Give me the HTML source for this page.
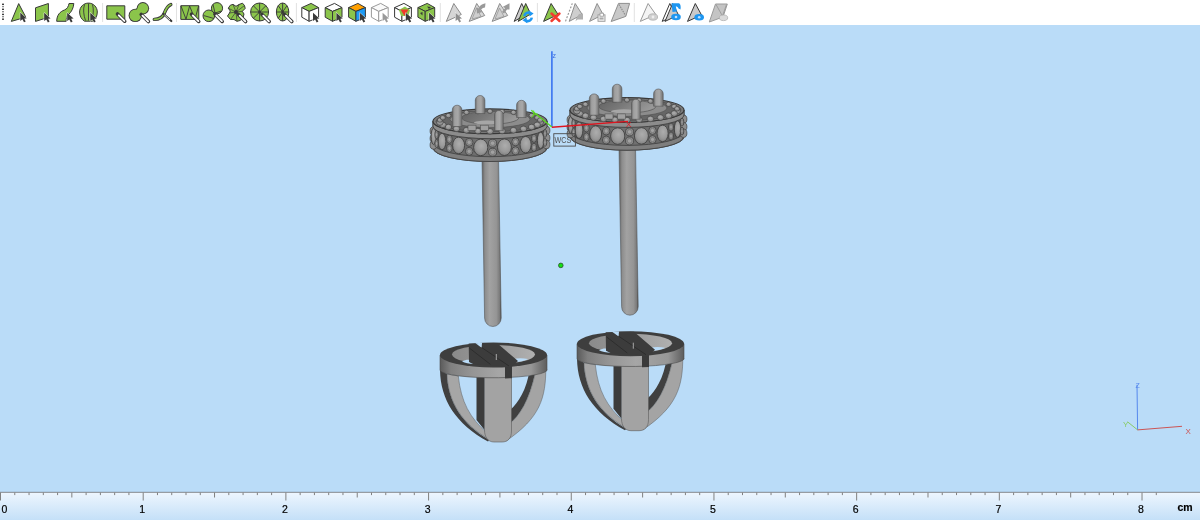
<!DOCTYPE html>
<html><head><meta charset="utf-8"><style>
html,body{margin:0;padding:0;width:1200px;height:520px;overflow:hidden;background:#badcf8;font-family:"Liberation Sans",sans-serif}
</style></head><body>
<svg width="1200" height="520" viewBox="0 0 1200 520" style="position:absolute;left:0;top:0;will-change:transform">

<defs>
 <linearGradient id="rulerg" x1="0" y1="0" x2="0" y2="1">
  <stop offset="0" stop-color="#eef6fe"/><stop offset="1" stop-color="#c4e0f8"/>
 </linearGradient>
 <linearGradient id="postg" x1="0" y1="0" x2="1" y2="0">
  <stop offset="0" stop-color="#5e5e5e"/><stop offset="0.15" stop-color="#8c8c8c"/>
  <stop offset="0.4" stop-color="#a2a2a2"/><stop offset="0.75" stop-color="#959595"/>
  <stop offset="0.92" stop-color="#7a7a7a"/><stop offset="1" stop-color="#4e4e4e"/>
 </linearGradient>
 <linearGradient id="bandg" x1="0" y1="0" x2="1" y2="0">
  <stop offset="0" stop-color="#565656"/><stop offset="0.2" stop-color="#6a6a6a"/>
  <stop offset="0.5" stop-color="#727272"/><stop offset="0.8" stop-color="#6a6a6a"/>
  <stop offset="1" stop-color="#505050"/>
 </linearGradient>
 <linearGradient id="bbandg" x1="0" y1="0" x2="1" y2="0">
  <stop offset="0" stop-color="#5a5a5a"/><stop offset="0.1" stop-color="#808080"/>
  <stop offset="0.3" stop-color="#959595"/><stop offset="0.55" stop-color="#a6a6a6"/><stop offset="0.85" stop-color="#979797"/>
  <stop offset="1" stop-color="#5c5c5c"/>
 </linearGradient>
 <linearGradient id="wallg" x1="0" y1="0" x2="1" y2="0">
  <stop offset="0" stop-color="#8a8a8a"/><stop offset="0.5" stop-color="#9a9a9a"/>
  <stop offset="1" stop-color="#b0b0b0"/>
 </linearGradient>
 <linearGradient id="prongg" x1="0" y1="0" x2="1" y2="0">
  <stop offset="0" stop-color="#6a6a6a"/><stop offset="0.25" stop-color="#a0a0a0"/>
  <stop offset="0.6" stop-color="#a8a8a8"/><stop offset="1" stop-color="#6e6e6e"/>
 </linearGradient>
 <linearGradient id="holeg" x1="0" y1="0" x2="1" y2="0.3">
  <stop offset="0" stop-color="#626262"/><stop offset="0.5" stop-color="#7a7a7a"/>
  <stop offset="1" stop-color="#989898"/>
 </linearGradient>
 <radialGradient id="ballg" cx="0.55" cy="0.4" r="0.65">
  <stop offset="0" stop-color="#adadad"/><stop offset="0.6" stop-color="#999"/><stop offset="1" stop-color="#7a7a7a"/>
 </radialGradient>
</defs>

<rect x="0" y="0" width="1200" height="25" fill="#ffffff"/>
<rect x="0" y="25" width="1200" height="467" fill="#badcf8"/>
<rect x="0" y="492" width="1200" height="28" fill="url(#rulerg)"/>
<rect x="0" y="491" width="1200" height="1" fill="#aecbe4"/>
<rect x="0" y="492" width="1200" height="1" fill="#979ca2"/>
<rect x="0.00" y="492.5" width="1" height="8" fill="#808080"/>
<rect x="14.27" y="492.5" width="1" height="2.6" fill="#808080"/>
<rect x="28.54" y="492.5" width="1" height="2.6" fill="#808080"/>
<rect x="42.81" y="492.5" width="1" height="2.6" fill="#808080"/>
<rect x="57.08" y="492.5" width="1" height="2.6" fill="#808080"/>
<rect x="71.34" y="492.5" width="1" height="5" fill="#808080"/>
<rect x="85.61" y="492.5" width="1" height="2.6" fill="#808080"/>
<rect x="99.88" y="492.5" width="1" height="2.6" fill="#808080"/>
<rect x="114.15" y="492.5" width="1" height="2.6" fill="#808080"/>
<rect x="128.42" y="492.5" width="1" height="2.6" fill="#808080"/>
<rect x="142.69" y="492.5" width="1" height="8" fill="#808080"/>
<rect x="156.96" y="492.5" width="1" height="2.6" fill="#808080"/>
<rect x="171.23" y="492.5" width="1" height="2.6" fill="#808080"/>
<rect x="185.50" y="492.5" width="1" height="2.6" fill="#808080"/>
<rect x="199.77" y="492.5" width="1" height="2.6" fill="#808080"/>
<rect x="214.03" y="492.5" width="1" height="5" fill="#808080"/>
<rect x="228.30" y="492.5" width="1" height="2.6" fill="#808080"/>
<rect x="242.57" y="492.5" width="1" height="2.6" fill="#808080"/>
<rect x="256.84" y="492.5" width="1" height="2.6" fill="#808080"/>
<rect x="271.11" y="492.5" width="1" height="2.6" fill="#808080"/>
<rect x="285.38" y="492.5" width="1" height="8" fill="#808080"/>
<rect x="299.65" y="492.5" width="1" height="2.6" fill="#808080"/>
<rect x="313.92" y="492.5" width="1" height="2.6" fill="#808080"/>
<rect x="328.19" y="492.5" width="1" height="2.6" fill="#808080"/>
<rect x="342.46" y="492.5" width="1" height="2.6" fill="#808080"/>
<rect x="356.73" y="492.5" width="1" height="5" fill="#808080"/>
<rect x="370.99" y="492.5" width="1" height="2.6" fill="#808080"/>
<rect x="385.26" y="492.5" width="1" height="2.6" fill="#808080"/>
<rect x="399.53" y="492.5" width="1" height="2.6" fill="#808080"/>
<rect x="413.80" y="492.5" width="1" height="2.6" fill="#808080"/>
<rect x="428.07" y="492.5" width="1" height="8" fill="#808080"/>
<rect x="442.34" y="492.5" width="1" height="2.6" fill="#808080"/>
<rect x="456.61" y="492.5" width="1" height="2.6" fill="#808080"/>
<rect x="470.88" y="492.5" width="1" height="2.6" fill="#808080"/>
<rect x="485.15" y="492.5" width="1" height="2.6" fill="#808080"/>
<rect x="499.41" y="492.5" width="1" height="5" fill="#808080"/>
<rect x="513.68" y="492.5" width="1" height="2.6" fill="#808080"/>
<rect x="527.95" y="492.5" width="1" height="2.6" fill="#808080"/>
<rect x="542.22" y="492.5" width="1" height="2.6" fill="#808080"/>
<rect x="556.49" y="492.5" width="1" height="2.6" fill="#808080"/>
<rect x="570.76" y="492.5" width="1" height="8" fill="#808080"/>
<rect x="585.03" y="492.5" width="1" height="2.6" fill="#808080"/>
<rect x="599.30" y="492.5" width="1" height="2.6" fill="#808080"/>
<rect x="613.57" y="492.5" width="1" height="2.6" fill="#808080"/>
<rect x="627.84" y="492.5" width="1" height="2.6" fill="#808080"/>
<rect x="642.11" y="492.5" width="1" height="5" fill="#808080"/>
<rect x="656.37" y="492.5" width="1" height="2.6" fill="#808080"/>
<rect x="670.64" y="492.5" width="1" height="2.6" fill="#808080"/>
<rect x="684.91" y="492.5" width="1" height="2.6" fill="#808080"/>
<rect x="699.18" y="492.5" width="1" height="2.6" fill="#808080"/>
<rect x="713.45" y="492.5" width="1" height="8" fill="#808080"/>
<rect x="727.72" y="492.5" width="1" height="2.6" fill="#808080"/>
<rect x="741.99" y="492.5" width="1" height="2.6" fill="#808080"/>
<rect x="756.26" y="492.5" width="1" height="2.6" fill="#808080"/>
<rect x="770.53" y="492.5" width="1" height="2.6" fill="#808080"/>
<rect x="784.79" y="492.5" width="1" height="5" fill="#808080"/>
<rect x="799.06" y="492.5" width="1" height="2.6" fill="#808080"/>
<rect x="813.33" y="492.5" width="1" height="2.6" fill="#808080"/>
<rect x="827.60" y="492.5" width="1" height="2.6" fill="#808080"/>
<rect x="841.87" y="492.5" width="1" height="2.6" fill="#808080"/>
<rect x="856.14" y="492.5" width="1" height="8" fill="#808080"/>
<rect x="870.41" y="492.5" width="1" height="2.6" fill="#808080"/>
<rect x="884.68" y="492.5" width="1" height="2.6" fill="#808080"/>
<rect x="898.95" y="492.5" width="1" height="2.6" fill="#808080"/>
<rect x="913.22" y="492.5" width="1" height="2.6" fill="#808080"/>
<rect x="927.49" y="492.5" width="1" height="5" fill="#808080"/>
<rect x="941.75" y="492.5" width="1" height="2.6" fill="#808080"/>
<rect x="956.02" y="492.5" width="1" height="2.6" fill="#808080"/>
<rect x="970.29" y="492.5" width="1" height="2.6" fill="#808080"/>
<rect x="984.56" y="492.5" width="1" height="2.6" fill="#808080"/>
<rect x="998.83" y="492.5" width="1" height="8" fill="#808080"/>
<rect x="1013.10" y="492.5" width="1" height="2.6" fill="#808080"/>
<rect x="1027.37" y="492.5" width="1" height="2.6" fill="#808080"/>
<rect x="1041.64" y="492.5" width="1" height="2.6" fill="#808080"/>
<rect x="1055.91" y="492.5" width="1" height="2.6" fill="#808080"/>
<rect x="1070.17" y="492.5" width="1" height="5" fill="#808080"/>
<rect x="1084.44" y="492.5" width="1" height="2.6" fill="#808080"/>
<rect x="1098.71" y="492.5" width="1" height="2.6" fill="#808080"/>
<rect x="1112.98" y="492.5" width="1" height="2.6" fill="#808080"/>
<rect x="1127.25" y="492.5" width="1" height="2.6" fill="#808080"/>
<rect x="1141.52" y="492.5" width="1" height="8" fill="#808080"/>
<rect x="1155.79" y="492.5" width="1" height="2.6" fill="#808080"/>
<g font-family="Liberation Sans, sans-serif" font-size="10.5" fill="#000" stroke="#000" stroke-width="0.2"><text x="4.5" y="512.5" text-anchor="middle">0</text><text x="142.2" y="512.5" text-anchor="middle">1</text><text x="284.9" y="512.5" text-anchor="middle">2</text><text x="427.6" y="512.5" text-anchor="middle">3</text><text x="570.3" y="512.5" text-anchor="middle">4</text><text x="713.0" y="512.5" text-anchor="middle">5</text><text x="855.6" y="512.5" text-anchor="middle">6</text><text x="998.3" y="512.5" text-anchor="middle">7</text><text x="1141.0" y="512.5" text-anchor="middle">8</text><text x="1185" y="510.5" text-anchor="middle" font-weight="bold" font-size="10.5">cm</text></g>
<g id="ear1"><path d="M440,370 C440.5,400 456,424 488,441.5 C489,441 489,440.5 488.5,439.5 C462,424 448,402 447,374 Z" fill="#404040"/>
<path d="M447,374 C448,402 462,424 490,440 L487,433 C470,418 461,402 458.3,376 Z" fill="#a6a6a6" stroke="#5a5a5a" stroke-width="0.5"/>
<path d="M476.5,377 L484.5,377 L484.5,430 L476.5,420 Z" fill="#3c3c3c"/>
<path d="M535,374 C529,400 520,416 508,425 L508,412 C515,406 524,396 528.5,376 Z" fill="#404040"/>
<path d="M545.8,367 C546,398 540,418 506,441 L508,425 C520,416 529,400 535,374 Z" fill="#a4a4a4" stroke="#5a5a5a" stroke-width="0.5"/>
<path d="M484.5,377 L511.5,377 L511.5,431 C511.5,438 508,442 502,442 L494,442 C488,442 484.5,437 484.5,430 Z" fill="#a3a3a3" stroke="#5a5a5a" stroke-width="0.6"/>
<path d="M440.0,355 L440.0,370.5 A53.5,8 0 0 0 547.0,369 L547.0,355 Z" fill="url(#bbandg)" stroke="#4a4a4a" stroke-width="0.6"/>
<path d="M505,366 L512,366 L512,378.2 L505,378.5 Z" fill="#3a3a3a"/>
<ellipse cx="493.5" cy="355" rx="53.5" ry="12.5" fill="#3e3e3e"/>
<ellipse cx="493.5" cy="354.5" rx="41.5" ry="9.5" fill="url(#wallg)"/>
<path d="M462,361.5 C466,359 470,359.5 473,360.5 L474,364 C469,364 465,363 462,361.5 Z" fill="#badcf8"/>
<path d="M513,359 C518,358 523,358 528,359 C525,361 519,362 515,362 Z" fill="#badcf8"/>
<path d="M468.7,343.6 L475.8,343.6 L481.5,347.4 L481.9,343.1 L497,343.1 L518,361 L512,366.5 L505,366.5 L474,364.5 L469,362 Z" fill="#3c3c3c"/>
<path d="M475.4,343.2 L481.5,347.6 L482.1,342.8 Z" fill="#badcf8"/>
<path d="M469.3,348 L490.3,364.3" stroke="#2a2a2a" stroke-width="0.8"/>
<path d="M481.8,347.6 L509,366" stroke="#2a2a2a" stroke-width="0.8"/>
<path d="M496.3,354 L496.3,360" stroke="#a8a8a8" stroke-width="1"/>
<path d="M482,158 L498.5,158 L501.2,318 A8.3,8.5 0 0 1 484.6,318 Z" fill="url(#postg)" stroke="#555" stroke-width="0.6"/>
<path d="M433,121.3 L433,148 A57,13.5 0 0 0 547,148 L547,121.3 Z" fill="url(#bandg)" stroke="#3e3e3e" stroke-width="0.9"/>
<path d="M433.5,143.2 A56.5,13.5 0 0 0 546.5,143.2 L546.5,148 A56.5,13.5 0 0 1 433.5,148 Z" fill="#7e7e7e" stroke="#454545" stroke-width="0.9"/>
<ellipse cx="433.5" cy="131.0" rx="3.4" ry="4.2" fill="#8e8e8e" stroke="#4a4a4a" stroke-width="0.8"/>
<ellipse cx="433.5" cy="138.5" rx="3.4" ry="4.2" fill="#8e8e8e" stroke="#4a4a4a" stroke-width="0.8"/>
<ellipse cx="433.5" cy="145.0" rx="3.4" ry="4.2" fill="#8e8e8e" stroke="#4a4a4a" stroke-width="0.8"/>
<ellipse cx="546.5" cy="130.5" rx="3.4" ry="4.2" fill="#8e8e8e" stroke="#4a4a4a" stroke-width="0.8"/>
<ellipse cx="546.5" cy="138.0" rx="3.4" ry="4.2" fill="#8e8e8e" stroke="#4a4a4a" stroke-width="0.8"/>
<ellipse cx="546.5" cy="144.5" rx="3.4" ry="4.2" fill="#8e8e8e" stroke="#4a4a4a" stroke-width="0.8"/>
<ellipse cx="433.6" cy="136.3" rx="2.5" ry="8.3" fill="url(#ballg)" stroke="#404040" stroke-width="0.9"/>
<ellipse cx="442.0" cy="141.5" rx="3.9" ry="8.3" fill="url(#ballg)" stroke="#404040" stroke-width="0.9"/>
<ellipse cx="458.6" cy="145.4" rx="6.0" ry="8.3" fill="url(#ballg)" stroke="#404040" stroke-width="0.9"/>
<ellipse cx="480.7" cy="147.4" rx="7.1" ry="8.3" fill="url(#ballg)" stroke="#404040" stroke-width="0.9"/>
<ellipse cx="504.4" cy="147.2" rx="7.0" ry="8.3" fill="url(#ballg)" stroke="#404040" stroke-width="0.9"/>
<ellipse cx="525.6" cy="144.7" rx="5.6" ry="8.3" fill="url(#ballg)" stroke="#404040" stroke-width="0.9"/>
<ellipse cx="540.6" cy="140.4" rx="3.3" ry="8.3" fill="url(#ballg)" stroke="#404040" stroke-width="0.9"/>
<ellipse cx="436.6" cy="134.6" rx="1.8" ry="4" fill="#8a8a8a" stroke="#404040" stroke-width="0.8"/>
<ellipse cx="436.6" cy="134.6" rx="1.0" ry="2.2" fill="#a2a2a2" stroke="#5a5a5a" stroke-width="0.4"/>
<ellipse cx="436.6" cy="143.6" rx="1.8" ry="4" fill="#8a8a8a" stroke="#404040" stroke-width="0.8"/>
<ellipse cx="436.6" cy="143.6" rx="1.0" ry="2.2" fill="#a2a2a2" stroke="#5a5a5a" stroke-width="0.4"/>
<ellipse cx="449.4" cy="139.2" rx="2.9" ry="4" fill="#8a8a8a" stroke="#404040" stroke-width="0.8"/>
<ellipse cx="449.4" cy="139.2" rx="1.6" ry="2.2" fill="#a2a2a2" stroke="#5a5a5a" stroke-width="0.4"/>
<ellipse cx="449.4" cy="148.2" rx="2.9" ry="4" fill="#8a8a8a" stroke="#404040" stroke-width="0.8"/>
<ellipse cx="449.4" cy="148.2" rx="1.6" ry="2.2" fill="#a2a2a2" stroke="#5a5a5a" stroke-width="0.4"/>
<ellipse cx="469.2" cy="142.3" rx="3.8" ry="4" fill="#8a8a8a" stroke="#404040" stroke-width="0.8"/>
<ellipse cx="469.2" cy="142.3" rx="2.1" ry="2.2" fill="#a2a2a2" stroke="#5a5a5a" stroke-width="0.4"/>
<ellipse cx="469.2" cy="151.3" rx="3.8" ry="4" fill="#8a8a8a" stroke="#404040" stroke-width="0.8"/>
<ellipse cx="469.2" cy="151.3" rx="2.1" ry="2.2" fill="#a2a2a2" stroke="#5a5a5a" stroke-width="0.4"/>
<ellipse cx="492.6" cy="143.2" rx="4.1" ry="4" fill="#8a8a8a" stroke="#404040" stroke-width="0.8"/>
<ellipse cx="492.6" cy="143.2" rx="2.3" ry="2.2" fill="#a2a2a2" stroke="#5a5a5a" stroke-width="0.4"/>
<ellipse cx="492.6" cy="152.2" rx="4.1" ry="4" fill="#8a8a8a" stroke="#404040" stroke-width="0.8"/>
<ellipse cx="492.6" cy="152.2" rx="2.3" ry="2.2" fill="#a2a2a2" stroke="#5a5a5a" stroke-width="0.4"/>
<ellipse cx="515.5" cy="141.8" rx="3.7" ry="4" fill="#8a8a8a" stroke="#404040" stroke-width="0.8"/>
<ellipse cx="515.5" cy="141.8" rx="2.0" ry="2.2" fill="#a2a2a2" stroke="#5a5a5a" stroke-width="0.4"/>
<ellipse cx="515.5" cy="150.8" rx="3.7" ry="4" fill="#8a8a8a" stroke="#404040" stroke-width="0.8"/>
<ellipse cx="515.5" cy="150.8" rx="2.0" ry="2.2" fill="#a2a2a2" stroke="#5a5a5a" stroke-width="0.4"/>
<ellipse cx="534.0" cy="138.3" rx="2.6" ry="4" fill="#8a8a8a" stroke="#404040" stroke-width="0.8"/>
<ellipse cx="534.0" cy="138.3" rx="1.4" ry="2.2" fill="#a2a2a2" stroke="#5a5a5a" stroke-width="0.4"/>
<ellipse cx="534.0" cy="147.3" rx="2.6" ry="4" fill="#8a8a8a" stroke="#404040" stroke-width="0.8"/>
<ellipse cx="534.0" cy="147.3" rx="1.4" ry="2.2" fill="#a2a2a2" stroke="#5a5a5a" stroke-width="0.4"/>
<ellipse cx="545.0" cy="133.4" rx="1.8" ry="4" fill="#8a8a8a" stroke="#404040" stroke-width="0.8"/>
<ellipse cx="545.0" cy="133.4" rx="1.0" ry="2.2" fill="#a2a2a2" stroke="#5a5a5a" stroke-width="0.4"/>
<ellipse cx="545.0" cy="142.4" rx="1.8" ry="4" fill="#8a8a8a" stroke="#404040" stroke-width="0.8"/>
<ellipse cx="545.0" cy="142.4" rx="1.0" ry="2.2" fill="#a2a2a2" stroke="#5a5a5a" stroke-width="0.4"/>
<path d="M433,121.3 A57,12.4 0 0 0 547,121.3 L547,126.3 A57,12.4 0 0 1 433,126.3 Z" fill="#8c8c8c" stroke="#404040" stroke-width="0.9"/>
<ellipse cx="490" cy="121.3" rx="57" ry="12.4" fill="#7a7a7a" stroke="#383838" stroke-width="1.2"/>
<ellipse cx="490" cy="121.3" rx="54" ry="10.4" fill="#666" stroke="#4a4a4a" stroke-width="0.7"/>
<ellipse cx="490" cy="119.3" rx="40" ry="8.4" fill="#8c8c8c" stroke="#505050" stroke-width="0.7"/>
<ellipse cx="490.3" cy="117.8" rx="28.5" ry="6.4" fill="url(#holeg)" stroke="#555" stroke-width="0.7"/>
<ellipse cx="487" cy="122.6" rx="13" ry="2" fill="#a6a6a6"/>
<ellipse cx="540.1" cy="122.5" rx="3.3" ry="2.8" fill="#939393" stroke="#444" stroke-width="0.7"/>
<ellipse cx="539.8" cy="121.9" rx="1.8" ry="1.3" fill="#a6a6a6"/>
<ellipse cx="537.2" cy="124.8" rx="3.3" ry="2.8" fill="#939393" stroke="#444" stroke-width="0.7"/>
<ellipse cx="536.9" cy="124.2" rx="1.8" ry="1.3" fill="#a6a6a6"/>
<ellipse cx="531.6" cy="127.0" rx="3.3" ry="2.8" fill="#939393" stroke="#444" stroke-width="0.7"/>
<ellipse cx="531.3" cy="126.4" rx="1.8" ry="1.3" fill="#a6a6a6"/>
<ellipse cx="523.5" cy="128.8" rx="3.3" ry="2.8" fill="#939393" stroke="#444" stroke-width="0.7"/>
<ellipse cx="523.2" cy="128.2" rx="1.8" ry="1.3" fill="#a6a6a6"/>
<ellipse cx="513.5" cy="130.2" rx="3.3" ry="2.8" fill="#939393" stroke="#444" stroke-width="0.7"/>
<ellipse cx="513.2" cy="129.6" rx="1.8" ry="1.3" fill="#a6a6a6"/>
<ellipse cx="502.1" cy="131.0" rx="3.3" ry="2.8" fill="#939393" stroke="#444" stroke-width="0.7"/>
<ellipse cx="501.8" cy="130.4" rx="1.8" ry="1.3" fill="#a6a6a6"/>
<ellipse cx="490.0" cy="131.3" rx="3.3" ry="2.8" fill="#939393" stroke="#444" stroke-width="0.7"/>
<ellipse cx="489.7" cy="130.7" rx="1.8" ry="1.3" fill="#a6a6a6"/>
<ellipse cx="477.9" cy="131.0" rx="3.3" ry="2.8" fill="#939393" stroke="#444" stroke-width="0.7"/>
<ellipse cx="477.6" cy="130.4" rx="1.8" ry="1.3" fill="#a6a6a6"/>
<ellipse cx="466.5" cy="130.2" rx="3.3" ry="2.8" fill="#939393" stroke="#444" stroke-width="0.7"/>
<ellipse cx="466.2" cy="129.6" rx="1.8" ry="1.3" fill="#a6a6a6"/>
<ellipse cx="456.5" cy="128.8" rx="3.3" ry="2.8" fill="#939393" stroke="#444" stroke-width="0.7"/>
<ellipse cx="456.2" cy="128.2" rx="1.8" ry="1.3" fill="#a6a6a6"/>
<ellipse cx="448.4" cy="127.0" rx="3.3" ry="2.8" fill="#939393" stroke="#444" stroke-width="0.7"/>
<ellipse cx="448.1" cy="126.4" rx="1.8" ry="1.3" fill="#a6a6a6"/>
<ellipse cx="442.8" cy="124.8" rx="3.3" ry="2.8" fill="#939393" stroke="#444" stroke-width="0.7"/>
<ellipse cx="442.5" cy="124.2" rx="1.8" ry="1.3" fill="#a6a6a6"/>
<ellipse cx="439.9" cy="122.5" rx="3.3" ry="2.8" fill="#939393" stroke="#444" stroke-width="0.7"/>
<ellipse cx="439.6" cy="121.9" rx="1.8" ry="1.3" fill="#a6a6a6"/>
<ellipse cx="439.9" cy="120.1" rx="2.6" ry="2.2" fill="#939393" stroke="#444" stroke-width="0.7"/>
<ellipse cx="439.6" cy="119.5" rx="1.4" ry="1.0" fill="#a6a6a6"/>
<ellipse cx="442.8" cy="117.8" rx="2.6" ry="2.2" fill="#939393" stroke="#444" stroke-width="0.7"/>
<ellipse cx="442.5" cy="117.2" rx="1.4" ry="1.0" fill="#a6a6a6"/>
<ellipse cx="448.4" cy="115.6" rx="2.6" ry="2.2" fill="#939393" stroke="#444" stroke-width="0.7"/>
<ellipse cx="448.1" cy="115.0" rx="1.4" ry="1.0" fill="#a6a6a6"/>
<ellipse cx="456.5" cy="113.8" rx="2.6" ry="2.2" fill="#939393" stroke="#444" stroke-width="0.7"/>
<ellipse cx="456.2" cy="113.2" rx="1.4" ry="1.0" fill="#a6a6a6"/>
<ellipse cx="466.5" cy="112.4" rx="2.6" ry="2.2" fill="#939393" stroke="#444" stroke-width="0.7"/>
<ellipse cx="466.2" cy="111.8" rx="1.4" ry="1.0" fill="#a6a6a6"/>
<ellipse cx="477.9" cy="111.6" rx="2.6" ry="2.2" fill="#939393" stroke="#444" stroke-width="0.7"/>
<ellipse cx="477.6" cy="111.0" rx="1.4" ry="1.0" fill="#a6a6a6"/>
<ellipse cx="490.0" cy="111.3" rx="2.6" ry="2.2" fill="#939393" stroke="#444" stroke-width="0.7"/>
<ellipse cx="489.7" cy="110.7" rx="1.4" ry="1.0" fill="#a6a6a6"/>
<ellipse cx="502.1" cy="111.6" rx="2.6" ry="2.2" fill="#939393" stroke="#444" stroke-width="0.7"/>
<ellipse cx="501.8" cy="111.0" rx="1.4" ry="1.0" fill="#a6a6a6"/>
<ellipse cx="513.5" cy="112.4" rx="2.6" ry="2.2" fill="#939393" stroke="#444" stroke-width="0.7"/>
<ellipse cx="513.2" cy="111.8" rx="1.4" ry="1.0" fill="#a6a6a6"/>
<ellipse cx="523.5" cy="113.8" rx="2.6" ry="2.2" fill="#939393" stroke="#444" stroke-width="0.7"/>
<ellipse cx="523.2" cy="113.2" rx="1.4" ry="1.0" fill="#a6a6a6"/>
<ellipse cx="531.6" cy="115.6" rx="2.6" ry="2.2" fill="#939393" stroke="#444" stroke-width="0.7"/>
<ellipse cx="531.3" cy="115.0" rx="1.4" ry="1.0" fill="#a6a6a6"/>
<ellipse cx="537.2" cy="117.8" rx="2.6" ry="2.2" fill="#939393" stroke="#444" stroke-width="0.7"/>
<ellipse cx="536.9" cy="117.2" rx="1.4" ry="1.0" fill="#a6a6a6"/>
<ellipse cx="540.1" cy="120.1" rx="2.6" ry="2.2" fill="#939393" stroke="#444" stroke-width="0.7"/>
<ellipse cx="539.8" cy="119.5" rx="1.4" ry="1.0" fill="#a6a6a6"/>
<rect x="468" y="125.2" width="8" height="5.2" fill="#a0a0a0" stroke="#555" stroke-width="0.6"/>
<rect x="480.5" y="125.2" width="8" height="5.2" fill="#a0a0a0" stroke="#555" stroke-width="0.6"/>
<path d="M475.3,113.5 L475.3,100.3 A4.8,4.8 0 0 1 484.90000000000003,100.3 L484.90000000000003,113.5 Z" fill="url(#prongg)" stroke="#555" stroke-width="0.6"/>
<path d="M516.6,117.5 L516.6,105.1 A4.8,4.8 0 0 1 526.2,105.1 L526.2,117.5 Z" fill="url(#prongg)" stroke="#555" stroke-width="0.6"/>
<path d="M452.3,126.5 L452.3,110.0 A4.8,4.8 0 0 1 461.90000000000003,110.0 L461.90000000000003,126.5 Z" fill="url(#prongg)" stroke="#555" stroke-width="0.6"/>
<path d="M494.5,130.6 L494.5,114.9 A4.4,4.4 0 0 1 503.3,114.9 L503.3,130.6 Z" fill="url(#prongg)" stroke="#555" stroke-width="0.6"/></g>
<use href="#ear1" transform="translate(137,-11.3)"/>
<circle cx="560.8" cy="265.4" r="2.3" fill="#14e014" stroke="#2f4f2f" stroke-width="0.8"/>
<path d="M551.9,127 L551.9,51.2" stroke="#2f6cf0" stroke-width="1.5" fill="none"/>
<path d="M551.9,127 L531.3,110.3" stroke="#5fdc1e" stroke-width="1.3" fill="none"/>
<path d="M551.9,127.2 L628,121.4" stroke="#e0141e" stroke-width="1.4" fill="none"/>
<text x="552.5" y="57.5" font-family="Liberation Sans, sans-serif" font-size="7" fill="#3c6fe0">z</text>
<text x="0" y="0" font-family="Liberation Sans, sans-serif" font-size="10" fill="#5fdc1e" transform="translate(529.1,115.6) rotate(38)">Y</text>
<text x="626" y="127" font-family="Liberation Sans, sans-serif" font-size="8" fill="#e0141e">X</text>
<rect x="553.8" y="133.7" width="21.6" height="12.4" fill="none" stroke="#4a4a4a" stroke-width="0.9"/>
<text x="554.5" y="142.9" font-family="Liberation Sans, sans-serif" font-size="9.8" fill="#505050" textLength="16.8" lengthAdjust="spacingAndGlyphs">WCS</text>
<path d="M1137.6,429.9 L1137,384.8" stroke="#5588ee" stroke-width="1" fill="none"/>
<path d="M1137.6,429.9 L1127.5,421.8" stroke="#88cc66" stroke-width="1" fill="none"/>
<path d="M1137.6,429.9 L1182,426.3" stroke="#cc5555" stroke-width="1" fill="none"/>
<text x="1135.5" y="387.5" font-family="Liberation Sans, sans-serif" font-size="7" fill="#5588ee">Z</text>
<text x="1123" y="427" font-family="Liberation Sans, sans-serif" font-size="8" fill="#88cc66">Y</text>
<text x="1185.5" y="433.5" font-family="Liberation Sans, sans-serif" font-size="8" fill="#cc5555">X</text>
<g id="icons"><rect x="2.2" y="3.5999999999999996" width="1.6" height="1.4" fill="#111"/>
<rect x="2.2" y="5.8999999999999995" width="1.6" height="1.4" fill="#777"/>
<rect x="2.2" y="8.600000000000001" width="1.6" height="1.4" fill="#111"/>
<rect x="2.2" y="11.0" width="1.6" height="1.4" fill="#777"/>
<rect x="2.2" y="13.700000000000001" width="1.6" height="1.4" fill="#111"/>
<rect x="2.2" y="16.0" width="1.6" height="1.4" fill="#777"/>
<rect x="2.2" y="18.5" width="1.6" height="1.4" fill="#111"/>
<path d="M18.7,3.6 L25.8,17.2 L11.3,21.4 Z" fill="#8bc54b" stroke="#383838" stroke-width="1" stroke-linejoin="round"/>
<path d="M20.30,12.60 L20.30,20.90 L22.40,19.20 L24.00,22.20 L25.70,21.40 L24.20,18.50 L26.70,18.40 Z" fill="#3a3a3a" stroke="#ffffff" stroke-width="0.9" paint-order="stroke" stroke-linejoin="round"/>
<path d="M35.5,7.8 L48.4,3.5 L48.4,17.3 L35.5,21.4 Z" fill="#8bc54b" stroke="#383838" stroke-width="1" stroke-linejoin="round"/>
<path d="M44.20,12.80 L44.20,21.10 L46.30,19.40 L47.90,22.40 L49.60,21.60 L48.10,18.70 L50.60,18.60 Z" fill="#3a3a3a" stroke="#ffffff" stroke-width="0.9" paint-order="stroke" stroke-linejoin="round"/>
<path d="M56.7,21.3 C56.8,15 60,11.6 64.5,10 C67,9 68.5,6.5 69,3.5 L73.8,3.5 C73.5,8 71.5,12 68.5,14.5 C66.8,16 66.2,18.5 66.2,21.3 Z" fill="#8bc54b" stroke="#383838" stroke-width="1" stroke-linejoin="round"/>
<path d="M67.20,12.80 L67.20,21.10 L69.30,19.40 L70.90,22.40 L72.60,21.60 L71.10,18.70 L73.60,18.60 Z" fill="#3a3a3a" stroke="#ffffff" stroke-width="0.9" paint-order="stroke" stroke-linejoin="round"/>
<path d="M84.5,21.2 C81.5,19.5 79.6,16 79.6,12 C79.6,7 83.6,3.1 88.5,3.1 C93.4,3.1 97.3,7 97.3,12 C97.3,16 95.5,19.5 92.5,21.2 Z" fill="#8bc54b" stroke="#383838" stroke-width="1" stroke-linejoin="round"/>
<path d="M84.5,4.5 C83,9 83.5,15 85.5,20.5 M88.5,3.5 L88.5,20.5 M92.5,4.5 C93.8,9 93.5,15 91.8,20.5" fill="none" stroke="#383838" stroke-width="0.9"/>
<path d="M90.30,12.80 L90.30,21.10 L92.40,19.40 L94.00,22.40 L95.70,21.60 L94.20,18.70 L96.70,18.60 Z" fill="#3a3a3a" stroke="#ffffff" stroke-width="0.9" paint-order="stroke" stroke-linejoin="round"/>
<rect x="102.1" y="3" width="1" height="19" fill="#e2e2e2"/>
<rect x="106.8" y="5.8" width="18" height="13.4" fill="#8bc54b" stroke="#383838" stroke-width="1" stroke-linejoin="round"/>
<line x1="117.5" y1="14" x2="124.7" y2="21.2" stroke="#383838" stroke-width="3.6" stroke-linecap="round"/><line x1="118.8" y1="15.3" x2="124.4" y2="20.9" stroke="#fff" stroke-width="1.9" stroke-linecap="round"/>
<g fill="#383838"><circle cx="142.9" cy="8.3" r="6.2"/><circle cx="135.3" cy="15.4" r="6.7"/><path d="M139.51,4.68 L136.27,8.82 L131.64,11.48 L138.96,19.32 L141.93,14.88 L146.29,11.92 Z"/></g><g fill="#8bc54b"><circle cx="142.9" cy="8.3" r="5.3"/><circle cx="135.3" cy="15.4" r="5.8"/><path d="M140.01,5.20 L136.88,9.48 L132.13,12.01 L138.47,18.79 L141.32,14.22 L145.79,11.40 Z"/></g>
<line x1="141.2" y1="14.4" x2="148.39999999999998" y2="21.6" stroke="#383838" stroke-width="3.6" stroke-linecap="round"/><line x1="142.5" y1="15.700000000000001" x2="148.09999999999997" y2="21.3" stroke="#fff" stroke-width="1.9" stroke-linecap="round"/>
<path d="M154.3,19.4 C160,19.2 162.8,17 164.2,13.5 C165.7,9.5 167,6 170.8,4.6" fill="none" stroke="#383838" stroke-width="3.4" stroke-linecap="round"/>
<path d="M154.3,19.4 C160,19.2 162.8,17 164.2,13.5 C165.7,9.5 167,6 170.8,4.6" fill="none" stroke="#8bc54b" stroke-width="1.6" stroke-linecap="round"/>
<line x1="163.5" y1="14" x2="171.3" y2="21" stroke="#383838" stroke-width="2.2" stroke-linecap="round"/><line x1="164.5" y1="15" x2="170" y2="20" stroke="#fff" stroke-width="0.9"/>
<rect x="176.0" y="3" width="1" height="19" fill="#e2e2e2"/>
<rect x="180.8" y="5.7" width="18" height="13.7" fill="#8bc54b" stroke="#383838" stroke-width="1" stroke-linejoin="round"/>
<path d="M181,6 L186,19.2 L189.6,6 L195,19.2 L198.6,6" fill="none" stroke="#383838" stroke-width="0.9"/>
<line x1="191.5" y1="14.2" x2="198.7" y2="21.4" stroke="#383838" stroke-width="3.6" stroke-linecap="round"/><line x1="192.8" y1="15.5" x2="198.39999999999998" y2="21.099999999999998" stroke="#fff" stroke-width="1.9" stroke-linecap="round"/>
<circle cx="217" cy="8.2" r="5.6" fill="#8bc54b" stroke="#383838" stroke-width="1" stroke-linejoin="round"/>
<circle cx="208.8" cy="15.8" r="5.8" fill="#8bc54b" stroke="#383838" stroke-width="1" stroke-linejoin="round"/>
<path d="M213,4.5 L215,13 L221.5,11 M203.5,15.5 L214,18.5" fill="none" stroke="#383838" stroke-width="0.9"/>
<line x1="215" y1="14.2" x2="222.2" y2="21.4" stroke="#383838" stroke-width="3.6" stroke-linecap="round"/><line x1="216.3" y1="15.5" x2="221.89999999999998" y2="21.099999999999998" stroke="#fff" stroke-width="1.9" stroke-linecap="round"/>
<path d="M228.3,8.2 L230.3,5.2 L233.0,4.4 L236.0,6.3 L239.0,4.5 L242.5,3.2 L244.5,5.5 L245.2,8.4 L242.3,11.3 L244.0,14.0 L243.0,18.0 L240.0,20.5 L237.0,21.3 L234.0,19.5 L230.5,19.5 L227.5,16.0 L229.5,13.0 L230.3,11.0 Z" fill="#8bc54b" stroke="#383838" stroke-width="1" stroke-linejoin="round"/>
<path d="M236,12 L228.3,8.2 M236,12 L233.0,4.4 M236,12 L239.0,4.5 M236,12 L244.5,5.5 M236,12 L242.3,11.3 M236,12 L243.0,18.0 M236,12 L237.0,21.3 M236,12 L230.5,19.5 M236,12 L229.5,13.0 " stroke="#383838" stroke-width="0.7"/>
<circle cx="236" cy="12" r="2" fill="#383838"/>
<line x1="238.4" y1="14.4" x2="245.6" y2="21.6" stroke="#383838" stroke-width="3.6" stroke-linecap="round"/><line x1="239.70000000000002" y1="15.700000000000001" x2="245.29999999999998" y2="21.3" stroke="#fff" stroke-width="1.9" stroke-linecap="round"/>
<circle cx="259.6" cy="12" r="9" fill="#8bc54b" stroke="#383838" stroke-width="1" stroke-linejoin="round"/>
<path d="M259.6,12 L268.6,12.0 M259.6,12 L266.0,18.4 M259.6,12 L259.6,21.0 M259.6,12 L253.2,18.4 M259.6,12 L250.6,12.0 M259.6,12 L253.2,5.6 M259.6,12 L259.6,3.0 M259.6,12 L266.0,5.6 " stroke="#383838" stroke-width="0.9"/>
<circle cx="259.6" cy="12" r="1.5" fill="#383838"/>
<line x1="262" y1="14.4" x2="269.2" y2="21.6" stroke="#383838" stroke-width="3.6" stroke-linecap="round"/><line x1="263.3" y1="15.700000000000001" x2="268.9" y2="21.3" stroke="#fff" stroke-width="1.9" stroke-linecap="round"/>
<ellipse cx="282.6" cy="12" rx="6.2" ry="9" fill="#8bc54b" stroke="#383838" stroke-width="1" stroke-linejoin="round"/>
<path d="M282.6,12 L288.8,12.0 M282.6,12 L287.0,18.4 M282.6,12 L282.6,21.0 M282.6,12 L278.2,18.4 M282.6,12 L276.4,12.0 M282.6,12 L278.2,5.6 M282.6,12 L282.6,3.0 M282.6,12 L287.0,5.6 " stroke="#383838" stroke-width="0.9"/>
<circle cx="282.6" cy="12" r="1.3" fill="#383838"/>
<line x1="284.6" y1="14.4" x2="291.8" y2="21.6" stroke="#383838" stroke-width="3.6" stroke-linecap="round"/><line x1="285.90000000000003" y1="15.700000000000001" x2="291.5" y2="21.3" stroke="#fff" stroke-width="1.9" stroke-linecap="round"/>
<rect x="295.9" y="3" width="1" height="19" fill="#e2e2e2"/>
<path d="M311.1,3.4 L318.6,7.6 L309.1,11.4 L301.8,7.6 Z" fill="#8bc54b" stroke="#383838" stroke-width="1" stroke-linejoin="round"/><path d="M301.8,7.6 L309.1,11.4 L309.1,21.3 L301.8,17.2 Z" fill="#fff" stroke="#383838" stroke-width="1" stroke-linejoin="round"/><path d="M309.1,11.4 L318.6,7.6 L318.6,17.4 L309.1,21.3 Z" fill="#fff" stroke="#383838" stroke-width="1" stroke-linejoin="round"/><path d="M313.00,12.80 L313.00,21.10 L315.10,19.40 L316.70,22.40 L318.40,21.60 L316.90,18.70 L319.40,18.60 Z" fill="#3a3a3a" stroke="#ffffff" stroke-width="0.9" paint-order="stroke" stroke-linejoin="round"/>
<path d="M334.5,3.4 L342.0,7.6 L332.5,11.4 L325.2,7.6 Z" fill="#fff" stroke="#383838" stroke-width="1" stroke-linejoin="round"/><path d="M325.2,7.6 L332.5,11.4 L332.5,21.3 L325.2,17.2 Z" fill="#8bc54b" stroke="#383838" stroke-width="1" stroke-linejoin="round"/><path d="M332.5,11.4 L342.0,7.6 L342.0,17.4 L332.5,21.3 Z" fill="#8bc54b" stroke="#383838" stroke-width="1" stroke-linejoin="round"/><path d="M336.40,12.80 L336.40,21.10 L338.50,19.40 L340.10,22.40 L341.80,21.60 L340.30,18.70 L342.80,18.60 Z" fill="#3a3a3a" stroke="#ffffff" stroke-width="0.9" paint-order="stroke" stroke-linejoin="round"/>
<path d="M357.9,3.4 L365.4,7.6 L355.9,11.4 L348.6,7.6 Z" fill="#ffa000" stroke="#383838" stroke-width="1" stroke-linejoin="round"/><path d="M348.6,7.6 L355.9,11.4 L355.9,21.3 L348.6,17.2 Z" fill="#8bc54b" stroke="#383838" stroke-width="1" stroke-linejoin="round"/><path d="M355.9,11.4 L365.4,7.6 L365.4,17.4 L355.9,21.3 Z" fill="#1e9bf5" stroke="#383838" stroke-width="1" stroke-linejoin="round"/><path d="M359.80,12.80 L359.80,21.10 L361.90,19.40 L363.50,22.40 L365.20,21.60 L363.70,18.70 L366.20,18.60 Z" fill="#3a3a3a" stroke="#ffffff" stroke-width="0.9" paint-order="stroke" stroke-linejoin="round"/>
<path d="M380.7,3.4 L388.2,7.6 L378.7,11.4 L371.4,7.6 Z" fill="#fafafa" stroke="#9a9a9a" stroke-width="1" stroke-linejoin="round"/><path d="M371.4,7.6 L378.7,11.4 L378.7,21.3 L371.4,17.2 Z" fill="#fff" stroke="#9a9a9a" stroke-width="1" stroke-linejoin="round"/><path d="M378.7,11.4 L388.2,7.6 L388.2,17.4 L378.7,21.3 Z" fill="#fff" stroke="#9a9a9a" stroke-width="1" stroke-linejoin="round"/><path d="M382.60,12.80 L382.60,21.10 L384.70,19.40 L386.30,22.40 L388.00,21.60 L386.50,18.70 L389.00,18.60 Z" fill="#9a9a9a" stroke="#ffffff" stroke-width="0.9" paint-order="stroke" stroke-linejoin="round"/>
<path d="M403.9,3.4 L411.4,7.6 L401.9,11.4 L394.6,7.6 Z" fill="#fff" stroke="#383838" stroke-width="1" stroke-linejoin="round"/><path d="M394.6,7.6 L401.9,11.4 L401.9,21.3 L394.6,17.2 Z" fill="#fff" stroke="#383838" stroke-width="1" stroke-linejoin="round"/><path d="M401.9,11.4 L411.4,7.6 L411.4,17.4 L401.9,21.3 Z" fill="#fff" stroke="#383838" stroke-width="1" stroke-linejoin="round"/>
<path d="M399,10 L405,6.5 L410,10 L408.5,16 L401,16 Z" fill="#8bc54b"/>
<path d="M400.5,9.5 L408.5,9.5 L404.5,16 Z" fill="#f03a2a"/>
<path d="M405.80,12.80 L405.80,21.10 L407.90,19.40 L409.50,22.40 L411.20,21.60 L409.70,18.70 L412.20,18.60 Z" fill="#3a3a3a" stroke="#ffffff" stroke-width="0.9" paint-order="stroke" stroke-linejoin="round"/>
<path d="M427.2,3.4 L434.7,7.6 L425.2,11.4 L417.9,7.6 Z" fill="#8bc54b" stroke="#383838" stroke-width="1" stroke-linejoin="round"/><path d="M417.9,7.6 L425.2,11.4 L425.2,21.3 L417.9,17.2 Z" fill="#8bc54b" stroke="#383838" stroke-width="1" stroke-linejoin="round"/><path d="M425.2,11.4 L434.7,7.6 L434.7,17.4 L425.2,21.3 Z" fill="#8bc54b" stroke="#383838" stroke-width="1" stroke-linejoin="round"/><path d="M429.10,12.80 L429.10,21.10 L431.20,19.40 L432.80,22.40 L434.50,21.60 L433.00,18.70 L435.50,18.60 Z" fill="#3a3a3a" stroke="#ffffff" stroke-width="0.9" paint-order="stroke" stroke-linejoin="round"/>
<path d="M420,13 L422.5,12 L422.5,15.5 Z M427,6.5 L431,7 L429,9 Z" fill="#383838"/>
<rect x="439.8" y="3" width="1" height="19" fill="#e2e2e2"/>
<path d="M453.8,3.5 L461.3,14.5 L446.3,21.4 Z" fill="#d6d6d6" stroke="#8c8c8c" stroke-width="1" stroke-linejoin="round"/>
<path d="M455.60,12.80 L455.60,21.10 L457.70,19.40 L459.30,22.40 L461.00,21.60 L459.50,18.70 L462.00,18.60 Z" fill="#8e8e8e" stroke="#ffffff" stroke-width="0.9" paint-order="stroke" stroke-linejoin="round"/>
<path d="M476.7,3.5 L484.7,15.5 L469.2,21.4 Z" fill="#d8d8d8" stroke="#8c8c8c" stroke-width="1" stroke-linejoin="round"/>
<path d="M472,19 L476.5,8 L481,16.5 Z" fill="#cfcfcf" stroke="#999" stroke-width="0.8"/>
<path d="M485.5,3.3 C482,4 479.5,5.5 478.5,8.5 L476.5,7 L477,13.5 L482.5,12 L480.5,10.5 C481.5,8.5 483.5,7.5 485,7.5 Z" fill="#9a9a9a"/>
<path d="M499.7,3.5 L507.7,15.5 L492.2,21.4 Z" fill="#d8d8d8" stroke="#8c8c8c" stroke-width="1" stroke-linejoin="round"/>
<path d="M495,19 L499.5,8 L504,16.5 Z" fill="#cfcfcf" stroke="#999" stroke-width="0.8"/>
<path d="M509.5,3.3 L509.5,9.5 L507,9.5 L504,13.5 L502,12 L505,8 L502.5,7 Z" fill="#9a9a9a"/>
<path d="M521.7,3.5 L526.7,14.0 L514.2,21.4 Z" fill="#cdcdcd" stroke="#383838" stroke-width="1" stroke-linejoin="round"/>
<path d="M525.7,3.5 L530.7,14.0 L518.2,21.4 Z" fill="#8bc54b" stroke="#383838" stroke-width="1" stroke-linejoin="round"/>
<path d="M524.3,16.2 C524.8,13.3 527.5,12.2 530,12.8" fill="none" stroke="#1e96f0" stroke-width="2.6"/>
<path d="M528.8,10.6 L533.6,13.6 L529.6,16.6 Z" fill="#1e96f0"/>
<path d="M531.8,17.6 C531.3,20.5 528.6,21.6 526.1,21" fill="none" stroke="#1e96f0" stroke-width="2.6"/>
<path d="M527.3,23.2 L522.5,20.2 L526.5,17.2 Z" fill="#1e96f0"/>
<rect x="536.9" y="3" width="1" height="19" fill="#e2e2e2"/>
<path d="M551.1,3.5 L558.1,14.5 L543.6,21.4 Z" fill="#8bc54b" stroke="#383838" stroke-width="1" stroke-linejoin="round"/>
<path d="M551.5,13.5 L559.5,21 M559.5,13.5 L551.5,21" stroke="#f23c30" stroke-width="2.4" stroke-linecap="round"/>
<path d="M565.5,21.4 L572.3,3.4" stroke="#9a9a9a" stroke-width="1.2" stroke-dasharray="2,1.5"/>
<path d="M575.2,3.5 L582.2,14.5 L569.2,21.4 Z" fill="#cecece" stroke="#8f8f8f" stroke-width="1" stroke-linejoin="round"/>
<path d="M583,13.5 L583,19.5 L577.5,19.5 L575.5,21.3 L576.5,17.8 L579,14 Z" fill="#b0b0b0"/>
<path d="M597.1,3.5 L603.1,14.5 L589.6,21.4 Z" fill="#cecece" stroke="#8f8f8f" stroke-width="1" stroke-linejoin="round"/>
<rect x="598" y="14.8" width="7" height="6.5" fill="#eee" stroke="#9a9a9a" stroke-width="0.9"/><rect x="600" y="13.2" width="3.5" height="3" fill="#fff" stroke="#9a9a9a" stroke-width="0.8"/><rect x="599.5" y="17.5" width="4" height="2" fill="#aaa"/>
<path d="M611.2,21.5 L618.5,3.4 L629.6,3.4 L625.8,16.4 Z" fill="#c8c8c8" stroke="#8f8f8f" stroke-width="1" stroke-linejoin="round"/>
<path d="M619,4.5 L625.5,15.5" stroke="#8f8f8f" stroke-width="1.2" stroke-dasharray="1.5,1"/>
<rect x="633.8" y="3" width="1" height="19" fill="#e2e2e2"/>
<path d="M648.1,3.5 L655.8,14.5 L640.3,21.4 Z" fill="#f4f4f4" stroke="#9a9a9a" stroke-width="1" stroke-linejoin="round"/>
<ellipse cx="653" cy="17" rx="4.6" ry="3.2" fill="#cfcfcf" stroke="#aaa" stroke-width="0.7"/><circle cx="653" cy="17" r="1.4" fill="#eee"/>
<path d="M669.8,3.5 L675.7,15.0 L662.2,21.4 Z" fill="#fff" stroke="#383838" stroke-width="1" stroke-linejoin="round"/>
<path d="M672.6,3.5 L678.5,15.0 L665.0,21.4 Z" fill="#c9c9c9" stroke="#383838" stroke-width="1" stroke-linejoin="round"/>
<path d="M671.5,3.2 L679,3.2 C680.5,4 681,6 680.5,9.5 L678.5,8.5 C678,7 677,6.5 675.8,6.5 L677,11.5 L672.5,12 Z" fill="#1e96f0"/>
<ellipse cx="676" cy="17" rx="4.8" ry="3.3" fill="#1e96f0"/><circle cx="676" cy="17" r="1.3" fill="#bfe0ff"/>
<path d="M695.3,3.5 L701.5,15.0 L687.5,21.4 Z" fill="#c9c9c9" stroke="#383838" stroke-width="1" stroke-linejoin="round"/>
<ellipse cx="699.2" cy="17.2" rx="4.8" ry="3.3" fill="#1e96f0"/><circle cx="699.2" cy="17.2" r="1.3" fill="#bfe0ff"/>
<path d="M709.3,22 L715.5,4 L727.3,4 L723,17 Z" fill="#c4c4c4" stroke="#9a9a9a" stroke-width="1" stroke-linejoin="round"/>
<path d="M716,4.5 L722.5,16 L726.5,4.5" fill="none" stroke="#999" stroke-width="0.9"/>
<ellipse cx="723.5" cy="17.8" rx="4.2" ry="2.8" fill="#dadada" stroke="#aaa" stroke-width="0.7"/></g>
</svg>
</body></html>
